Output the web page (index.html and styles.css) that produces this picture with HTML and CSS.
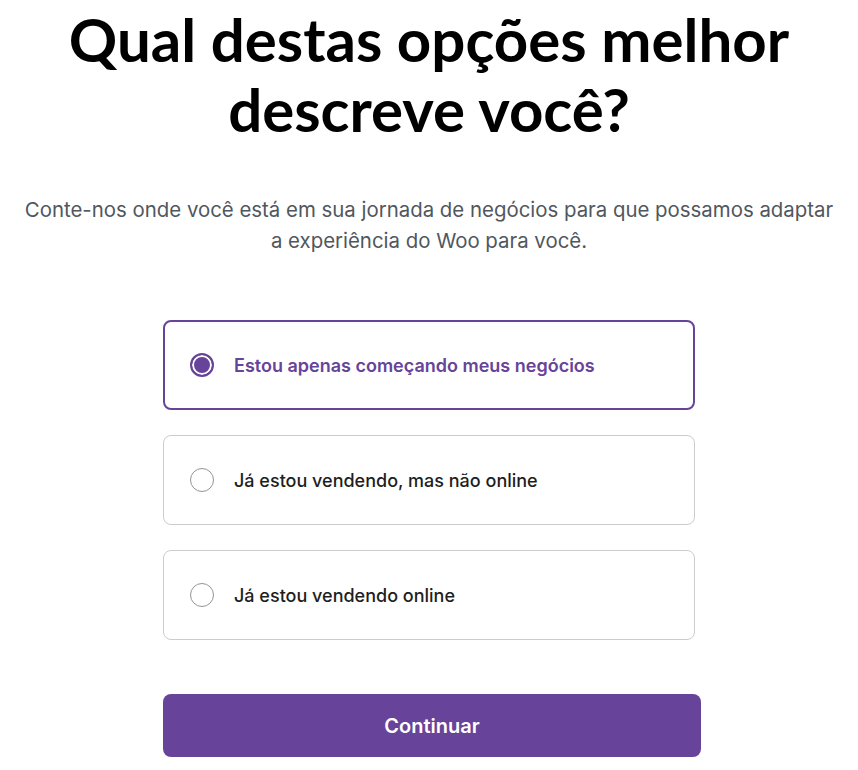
FILE: index.html
```html
<!DOCTYPE html>
<html lang="pt-BR">
<head>
    <meta charset="UTF-8">
    <meta name="viewport" content="width=device-width, initial-scale=1.0">
    <title>Perfil da loja</title>
    <link rel="stylesheet" href="styles.css">
</head>
<body>
    <div class="profiler">
        <h1 class="profiler_title">Qual destas opções melhor descreve você?</h1>
        <p class="profiler_subtitle">Conte-nos onde você está em sua jornada de negócios para que possamos adaptar a experiência do Woo para você.</p>

        <div class="options">
            <label class="option selected">
                <span class="radio"></span>
                <span class="option_label">Estou apenas começando meus negócios</span>
            </label>
            <label class="option">
                <span class="radio"></span>
                <span class="option_label">Já estou vendendo, mas não online</span>
            </label>
            <label class="option">
                <span class="radio"></span>
                <span class="option_label">Já estou vendendo online</span>
            </label>
        </div>

        <button class="button">Continuar</button>
    </div>
</body>
</html>
```

FILE: styles.css
```css
body {
    margin: 0;
    background: #fff;
    font-family: Inter, "Noto Sans", sans-serif;
    color: #1e1e1e;
}

.profiler {
    display: flex;
    flex-direction: column;
    align-items: center;
}

.profiler_title {
    margin: 4px 0 0 0;
    width: 760px;
    text-align: center;
    font-family: Lato, "Liberation Sans", sans-serif;
    font-size: 60px;
    font-weight: 700;
    line-height: 70px;
    color: #000;
}

.profiler_subtitle {
    margin: 50px 0 0 0;
    width: 820px;
    text-align: center;
    font-size: 20.4px;
    line-height: 31px;
    color: #50575e;
}

.options {
    display: flex;
    flex-direction: column;
    gap: 25px;
    margin-top: 64px;
    width: 532px;
}

.option {
    display: flex;
    align-items: center;
    box-sizing: border-box;
    height: 90px;
    padding: 0 26px;
    border: 1px solid #ccc;
    border-radius: 8px;
    cursor: pointer;
}

.option.selected {
    border: 2px solid #674399;
    padding: 0 25px;
}

.radio {
    box-sizing: border-box;
    width: 24px;
    height: 24px;
    margin-right: 20px;
    border: 1px solid #949494;
    border-radius: 50%;
    flex-shrink: 0;
}

.selected .radio {
    border: 2px solid #674399;
    background: #674399;
    box-shadow: inset 0 0 0 2px #fff;
}

.option_label {
    font-size: 18px;
    font-weight: 500;
    color: #1e1e1e;
}

.selected .option_label {
    color: #674399;
    font-weight: 600;
}

.button {
    margin-top: 54px;
    margin-left: 6px;
    width: 538px;
    height: 63px;
    border: none;
    border-radius: 8px;
    background: #674399;
    color: #fff;
    font-family: Inter, "Noto Sans", sans-serif;
    font-size: 20px;
    font-weight: 600;
    cursor: pointer;
}
```
